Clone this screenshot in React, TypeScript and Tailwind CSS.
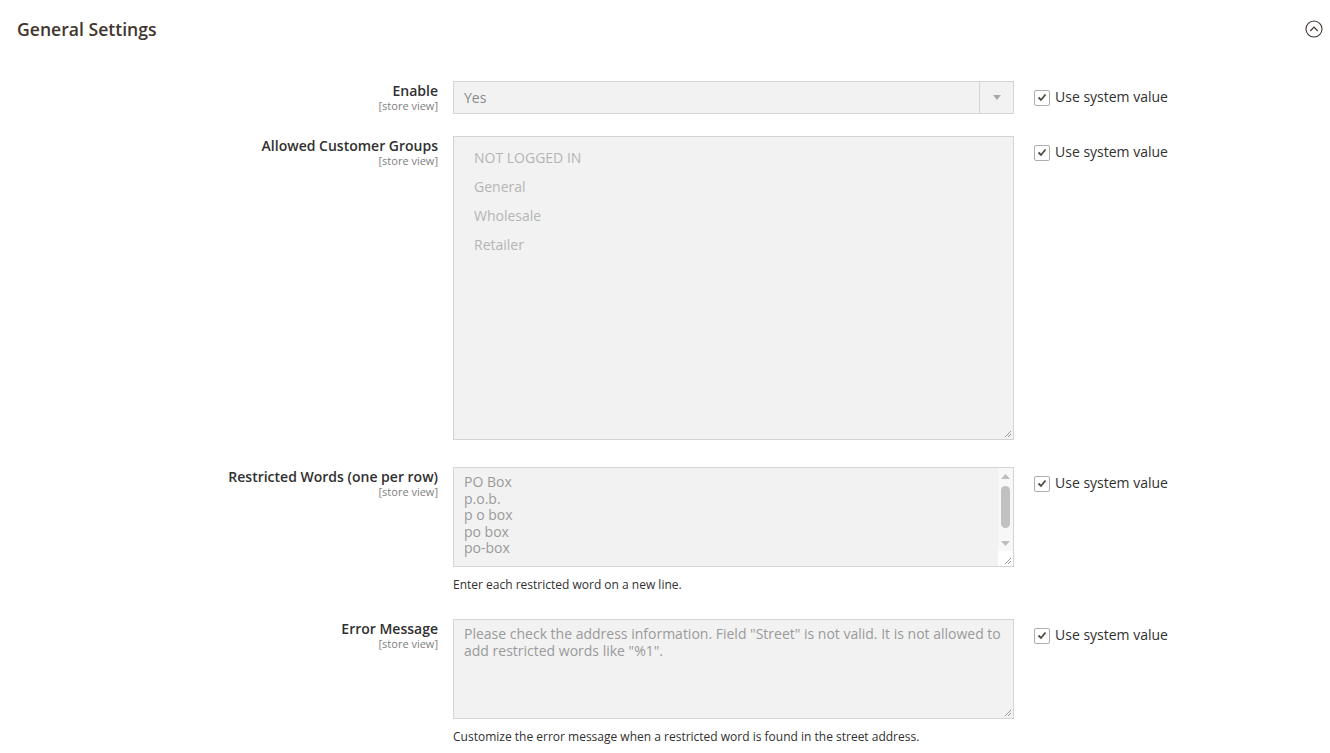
import React from 'react';

const ResizeHandle = () => (
  <svg width="9" height="9" viewBox="0 0 9 9" className="absolute right-[1px] bottom-[1px]">
    <line x1="8" y1="2" x2="2" y2="8" stroke="#9a9a9a" strokeWidth="1" />
    <line x1="8" y1="5" x2="5" y2="8" stroke="#9a9a9a" strokeWidth="1" />
  </svg>
);

const SystemValue = () => (
  <div className="ml-[20px] pt-[8px] flex items-center gap-[5px] shrink-0">
    <span className="w-[16px] h-[16px] border border-[#adadad] rounded-[2px] bg-white flex items-center justify-center">
      <svg width="10" height="9" viewBox="0 0 10 9">
        <path d="M1.5 4.5 L4 7 L8.5 1.5" fill="none" stroke="#514943" strokeWidth="1.8" />
      </svg>
    </span>
    <span className="text-[14px] leading-[19px] text-[#303030] -mt-[2px]">Use system value</span>
  </div>
);

const Label = ({ text }: { text: string }) => (
  <div className="w-[438px] shrink-0 text-right">
    <div className="text-[14px] leading-[19px] font-semibold text-[#303030]">{text}</div>
    <div className="text-[11px] leading-[11px] text-[#808080]">[store view]</div>
  </div>
);

export default function App() {
  const groups = ['NOT LOGGED IN', 'General', 'Wholesale', 'Retailer'];
  const words = ['PO Box', 'p.o.b.', 'p o box', 'po box', 'po-box'];

  return (
    <div className="w-full min-h-[753px] bg-white font-['Open_Sans',sans-serif] text-[#303030]">
      {/* Header */}
      <div className="flex items-center justify-between pl-[17px] pr-[6px] pt-[18px]">
        <h2 className="text-[17.6px] leading-[22px] font-semibold text-[#41362f]">General Settings</h2>
        <svg width="20" height="20" viewBox="0 0 20 20">
          <circle cx="10" cy="10" r="8" fill="none" stroke="#41362f" strokeWidth="1.1" />
          <path d="M6.3 12 L10 8.2 L13.7 12" fill="none" stroke="#41362f" strokeWidth="1.2" />
        </svg>
      </div>

      <div className="mt-[41px]">
        {/* Enable */}
        <div className="flex items-start">
          <Label text="Enable" />
          <div className="ml-[15px] w-[561px] h-[33px] border border-[#d4d4d4] bg-[#f2f2f2] flex items-stretch shrink-0">
            <div className="flex-1 pl-[10px] flex items-center text-[14px] text-[#8a8a8a]">Yes</div>
            <div className="w-[34px] border-l border-[#d4d4d4] flex items-center justify-center">
              <svg width="8" height="5" viewBox="0 0 8 5">
                <path d="M0 0 L8 0 L4 5 Z" fill="#a8a8a8" />
              </svg>
            </div>
          </div>
          <SystemValue />
        </div>

        {/* Allowed Customer Groups */}
        <div className="flex items-start mt-[22px]">
          <Label text="Allowed Customer Groups" />
          <div className="relative ml-[15px] w-[561px] h-[304px] border border-[#d4d4d4] bg-[#f2f2f2] pt-[6px] px-[20px] shrink-0">
            {groups.map((g) => (
              <div key={g} className="text-[14px] leading-[29px] text-[#b5b5b5]">{g}</div>
            ))}
            <ResizeHandle />
          </div>
          <SystemValue />
        </div>

        {/* Restricted Words */}
        <div className="flex items-start mt-[27px]">
          <Label text="Restricted Words (one per row)" />
          <div className="ml-[15px] w-[561px] shrink-0">
            <div className="relative h-[100px] border border-[#d4d4d4] bg-[#f2f2f2] flex">
              <div className="flex-1 pl-[10px] pt-[6px] text-[14px] leading-[16.5px] text-[#9a9a9a]">
                {words.map((w) => (
                  <div key={w}>{w}</div>
                ))}
              </div>
              <div className="w-[15px] flex flex-col bg-[#f7f7f7]">
                <div className="h-[16px] flex items-center justify-center">
                  <svg width="9" height="5" viewBox="0 0 9 5"><path d="M0 5 L9 5 L4.5 0 Z" fill="#bdbdbd" /></svg>
                </div>
                <div className="flex-1 flex justify-center pt-[2px] pb-[6px]">
                  <div className="w-[9px] h-[42px] rounded-full bg-[#c1c1c1]" />
                </div>
                <div className="h-[16px] flex items-center justify-center">
                  <svg width="9" height="5" viewBox="0 0 9 5"><path d="M0 0 L9 0 L4.5 5 Z" fill="#bdbdbd" /></svg>
                </div>
                <div className="h-[15px] bg-white" />
              </div>
              <ResizeHandle />
            </div>
            <div className="mt-[9px] text-[12px] leading-[17px] text-[#303030]">Enter each restricted word on a new line.</div>
          </div>
          <SystemValue />
        </div>

        {/* Error Message */}
        <div className="flex items-start mt-[26px]">
          <Label text="Error Message" />
          <div className="ml-[15px] w-[561px] shrink-0">
            <div className="relative h-[100px] border border-[#d4d4d4] bg-[#f2f2f2] pl-[10px] pr-[8px] pt-[6px] text-[14px] leading-[16.5px] text-[#9a9a9a]">
              Please check the address information. Field "Street" is not valid. It is not allowed to
              <br />
              add restricted words like "%1".
              <ResizeHandle />
            </div>
            <div className="mt-[9px] text-[12px] leading-[17px] text-[#303030]">
              Customize the error message when a restricted word is found in the street address.
            </div>
          </div>
          <SystemValue />
        </div>
      </div>
    </div>
  );
}
